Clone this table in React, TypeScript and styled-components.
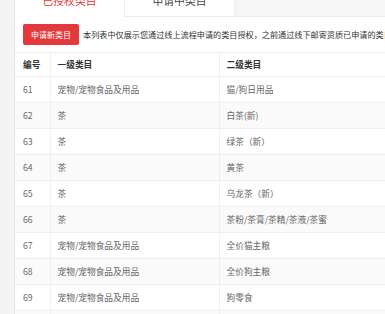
import React from "react";
import styled, { createGlobalStyle } from "styled-components";

const Global = createGlobalStyle`
  html, body { margin: 0; padding: 0; }
  body {
    background: #f4f4f4;
    font-family: "Noto Sans CJK SC", "Noto Sans", sans-serif;
    overflow: hidden;
    width: 385px;
    height: 314px;
  }
`;

const Page = styled.div`
  padding-left: 14px;
  margin-top: -16px;
  width: 560px;
`;

const Panel = styled.div`
  background: #fff;
  border-left: 1px solid #e4e4e4;
`;

const TabBar = styled.div`
  display: flex;
  height: 33px;
  background: #f6f6f6;
`;

const Tab = styled.div<{ $active?: boolean }>`
  width: 109px;
  height: 32px;
  display: flex;
  align-items: center;
  justify-content: center;
  font-size: 10.8px;
  background: #fff;
  color: ${(p) => (p.$active ? "#e4393c" : "#444")};
  border-left: ${(p) => (p.$active ? "none" : "1px solid #eeeeee")};
  border-bottom: 1px solid ${(p) => (p.$active ? "#fff" : "#ececec")};
`;

const TabRest = styled.div`
  flex: 1;
  border-left: 1px solid #eeeeee;
  border-bottom: 1px solid #ececec;
`;

const Toolbar = styled.div`
  display: flex;
  align-items: center;
  gap: 4px;
  padding: 7px 8px 7px 8px;
  white-space: nowrap;
`;

const RedButton = styled.button`
  width: 56px;
  height: 21px;
  border: none;
  border-radius: 2px;
  background: #e3393c;
  color: #fff;
  font-family: inherit;
  font-size: 8px;
  padding: 0;
  flex-shrink: 0;
`;

const Note = styled.span`
  font-size: 8.15px;
  color: #333;
`;

const Table = styled.table`
  border-collapse: collapse;
  width: 100%;
  table-layout: fixed;
`;

const HeadCell = styled.th<{ $w?: number; $first?: boolean }>`
  box-sizing: border-box;
  width: ${(p) => (p.$w ? `${p.$w}px` : "auto")};
  height: 24px;
  padding: 0 0 0 ${(p) => (p.$first ? 8 : 7)}px;
  text-align: left;
  font-size: 8.7px;
  font-weight: 600;
  color: #333;
  border-top: 1px solid #efefef;
  border-bottom: 1px solid #efefef;
  border-right: 1px solid #f0f0f0;
`;

const Row = styled.tr<{ $shade?: boolean }>`
  background: ${(p) => (p.$shade ? "#fafafa" : "#fff")};
`;

const Cell = styled.td<{ $first?: boolean }>`
  box-sizing: border-box;
  height: 26px;
  padding: 0 0 0 ${(p) => (p.$first ? 8 : 7)}px;
  font-size: 8.7px;
  color: #666;
  border-bottom: 1px solid #efefef;
  border-right: 1px solid #f0f0f0;
  white-space: nowrap;
`;

const rows: [string, string, string][] = [
  ["61", "宠物/宠物食品及用品", "猫/狗日用品"],
  ["62", "茶", "白茶(新)"],
  ["63", "茶", "绿茶（新）"],
  ["64", "茶", "黄茶"],
  ["65", "茶", "乌龙茶（新）"],
  ["66", "茶", "茶粉/茶膏/茶精/茶液/茶蜜"],
  ["67", "宠物/宠物食品及用品", "全价猫主粮"],
  ["68", "宠物/宠物食品及用品", "全价狗主粮"],
  ["69", "宠物/宠物食品及用品", "狗零食"],
  ["70", "宠物/宠物食品及用品", "猫零食"],
];

export default function App() {
  return (
    <>
      <Global />
      <Page>
        <Panel>
          <TabBar>
            <Tab $active>已授权类目</Tab>
            <Tab>申请中类目</Tab>
            <TabRest />
          </TabBar>
          <Toolbar>
            <RedButton>申请新类目</RedButton>
            <Note>
              本列表中仅展示您通过线上流程申请的类目授权，之前通过线下邮寄资质已申请的类目不在此列表中展示
            </Note>
          </Toolbar>
          <Table>
            <thead>
              <tr>
                <HeadCell $w={35} $first>编号</HeadCell>
                <HeadCell $w={169}>一级类目</HeadCell>
                <HeadCell>二级类目</HeadCell>
              </tr>
            </thead>
            <tbody>
              {rows.map((r, i) => (
                <Row key={r[0]} $shade={i % 2 === 1}>
                  <Cell $first>{r[0]}</Cell>
                  <Cell>{r[1]}</Cell>
                  <Cell>{r[2]}</Cell>
                </Row>
              ))}
            </tbody>
          </Table>
        </Panel>
      </Page>
    </>
  );
}
